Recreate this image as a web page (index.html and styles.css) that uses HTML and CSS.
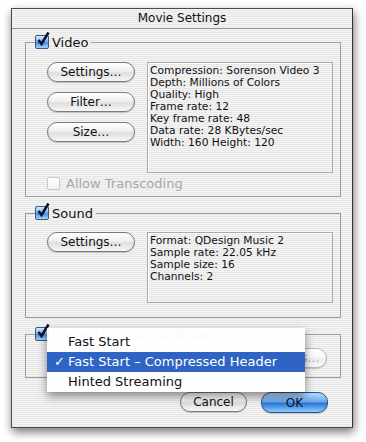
FILE: index.html
```html
<html>
<head>
<link rel="stylesheet" href="styles.css">
</head>
<body>
<div class="window">
	<div class="titlebar">Movie Settings</div>
	<div class="content">

		<fieldset class="group video">
			<legend><span class="check on"><svg class="mark" width="14" height="16" viewBox="0 0 14 16"><path d="M2.5 9 L5.5 13 L12.5 1.5" /></svg></span>Video</legend>
			<div class="row">
				<div class="buttons">
					<button class="btn">Settings…</button>
					<button class="btn">Filter…</button>
					<button class="btn">Size…</button>
				</div>
				<div class="info tall">
					Compression: Sorenson Video 3<br>
					Depth: Millions of Colors<br>
					Quality: High<br>
					Frame rate: 12<br>
					Key frame rate: 48<br>
					Data rate: 28 KBytes/sec<br>
					Width: 160 Height: 120
				</div>
			</div>
			<div class="option disabled"><span class="check off"></span>Allow Transcoding</div>
		</fieldset>

		<fieldset class="group sound">
			<legend><span class="check on"><svg class="mark" width="14" height="16" viewBox="0 0 14 16"><path d="M2.5 9 L5.5 13 L12.5 1.5" /></svg></span>Sound</legend>
			<div class="row">
				<div class="buttons">
					<button class="btn">Settings…</button>
				</div>
				<div class="info short">
					Format: QDesign Music 2<br>
					Sample rate: 22.05 kHz<br>
					Sample size: 16<br>
					Channels: 2
				</div>
			</div>
		</fieldset>

		<fieldset class="group stream">
			<legend><span class="check on"><svg class="mark" width="14" height="16" viewBox="0 0 14 16"><path d="M2.5 9 L5.5 13 L12.5 1.5" /></svg></span><span class="faint">Prepare for Internet Streaming</span></legend>
			<div class="stream-row">
				<div class="popup"></div>
				<button class="btn small" disabled>Settings…</button>
			</div>
		</fieldset>

		<div class="actions">
			<button class="btn action">Cancel</button>
			<button class="btn action default">OK</button>
		</div>
	</div>

	<div class="menu">
		<div class="item">Fast Start</div>
		<div class="item selected"><span class="tick">✓</span>Fast Start – Compressed Header</div>
		<div class="item">Hinted Streaming</div>
	</div>
</div>
</body>
</html>
```

FILE: styles.css
```css
body {
	margin: 0;
	background: #ffffff;
	font-family: "DejaVu Sans", "Liberation Sans", sans-serif;
	color: #111;
}

.window {
	position: relative;
	box-sizing: border-box;
	margin: 8px 0 0 11px;
	width: 342px;
	height: 420px;
	border: 1px solid #4a4a4a;
	border-right-color: #333;
	background: repeating-linear-gradient(to bottom, #f4f4f4 0 1px, #e7e7e7 1px 2px);
	box-shadow: 1px 4px 9px rgba(0, 0, 0, 0.55);
	display: flex;
	flex-direction: column;
}

.titlebar {
	height: 19px;
	line-height: 19px;
	border-bottom: 1px solid #8c8c8c;
	text-align: center;
	font-size: 12px;
}

.content {
	padding: 5px 11px 0 13px;
	display: flex;
	flex-direction: column;
}

.group {
	margin: 0;
	padding: 0;
	min-width: 0;
	border: 1px solid #9c9c9c;
}

.group legend {
	margin-left: 9px;
	padding: 0 3px 0 0;
	height: 16px;
	display: flex;
	align-items: center;
	gap: 3px;
	font-size: 13px;
}

.sound {
	margin-top: 8px;
}

.stream {
	margin-top: 8px;
}

.stream legend {
	font-size: 12px;
}

.faint {
	color: #666;
}

.check {
	position: relative;
	box-sizing: border-box;
	width: 14px;
	height: 14px;
	border-radius: 2px;
}

.check.on {
	border: 1px solid #3d5878;
	background: linear-gradient(#dcebfc, #7fb3ee 45%, #4a8ce0 55%, #a6d4ff);
}

.check.off {
	width: 13px;
	height: 13px;
	border: 1px solid #c9c9c9;
	background: linear-gradient(#ffffff, #f1f1f1);
}

.mark {
	position: absolute;
	left: 0;
	top: -5px;
	overflow: visible;
}

.mark path {
	fill: none;
	stroke: #0d1630;
	stroke-width: 2.6;
	stroke-linejoin: miter;
}

.row {
	display: flex;
	gap: 12px;
	padding: 12px 0 0 21px;
}

.sound .row {
	padding-top: 11px;
	padding-bottom: 14px;
}

.buttons {
	display: flex;
	flex-direction: column;
	gap: 10px;
}

.btn {
	box-sizing: border-box;
	width: 88px;
	height: 20px;
	padding: 0;
	border: 1px solid #7a7a7a;
	border-radius: 10px;
	background: linear-gradient(#ffffff, #f0f0f0 45%, #dedede 55%, #f7f7f7);
	box-shadow: 0 1px 1px rgba(0, 0, 0, 0.18);
	font-family: "DejaVu Sans", "Liberation Sans", sans-serif;
	font-size: 12px;
	color: #111;
}

.info {
	box-sizing: border-box;
	width: 186px;
	padding: 2px 0 0 2px;
	border: 1px solid #a9a9a9;
	box-shadow: inset 1px 1px 0 #ffffff;
	font-size: 10.7px;
	line-height: 12px;
}

.info.tall {
	height: 111px;
}

.info.short {
	height: 71px;
}

.option {
	display: flex;
	align-items: center;
	gap: 6px;
	height: 16px;
	margin: 2px 0 5px 21px;
	font-size: 13px;
}

.option.disabled {
	color: #a8a8a8;
}

.stream-row {
	display: flex;
	justify-content: space-between;
	padding: 6px 13px 9px 21px;
}

.popup {
	width: 180px;
	height: 20px;
	box-sizing: border-box;
	border: 1px solid #8a8a8a;
	border-radius: 5px;
	background: linear-gradient(#ffffff, #ececec);
}

.btn.small {
	width: 76px;
	color: #a8a8a8;
	border-color: #b8b8b8;
	background: linear-gradient(#ffffff, #f6f6f6 50%, #eeeeee 51%, #f8f8f8);
}

.actions {
	display: flex;
	justify-content: flex-end;
	gap: 14px;
	margin: 14px 13px 0 0;
}

.btn.action {
	width: 67px;
	height: 20px;
}

.btn.default {
	height: 21px;
	border-color: #234f95;
	background: linear-gradient(#b9dcfb, #6aa9ec 45%, #2f78d6 55%, #8ccbff);
	color: #0a1430;
}

.menu {
	position: absolute;
	left: 35px;
	top: 319px;
	width: 258px;
	height: 64px;
	padding-top: 4px;
	box-sizing: border-box;
	background: rgba(255, 255, 255, 0.96);
	box-shadow: 0 4px 9px rgba(0, 0, 0, 0.45);
}

.item {
	position: relative;
	height: 20px;
	line-height: 20px;
	padding-left: 21px;
	font-size: 13px;
}

.item.selected {
	background: #2f64c4;
	color: #ffffff;
}

.tick {
	position: absolute;
	left: 7px;
}
```
